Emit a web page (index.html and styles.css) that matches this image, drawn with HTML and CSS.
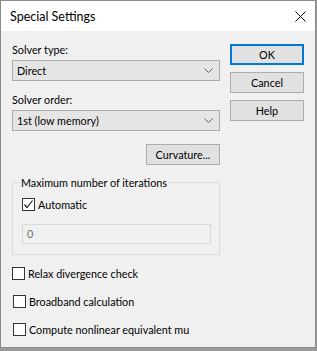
FILE: index.html
```html
<!doctype html>
<html lang="en">
    <head>
        <meta charset="UTF-8" />
        <title>Special Settings</title>
        <link rel="stylesheet" href="styles.css">
    </head>
    <body>
        <div class="window">
            <div class="titlebar">
                <span class="title">Special Settings</span>
                <svg class="close" width="11" height="11" viewBox="0 0 11 11">
                    <path d="M0.5 0.5 L10.5 10.5 M10.5 0.5 L0.5 10.5" stroke="#000" stroke-width="1" fill="none" />
                </svg>
            </div>

            <div class="content">
                <div class="main">
                    <div class="label first">Solver type:</div>
                    <div class="combo">
                        <span>Direct</span>
                        <svg class="chevron" width="9" height="5" viewBox="0 0 9 5">
                            <path d="M0.5 0.5 L4.5 4.5 L8.5 0.5" stroke="#606060" fill="none" />
                        </svg>
                    </div>

                    <div class="label">Solver order:</div>
                    <div class="combo">
                        <span>1st (low memory)</span>
                        <svg class="chevron" width="9" height="5" viewBox="0 0 9 5">
                            <path d="M0.5 0.5 L4.5 4.5 L8.5 0.5" stroke="#606060" fill="none" />
                        </svg>
                    </div>

                    <div class="curv-row">
                        <button class="btn curv">Curvature...</button>
                    </div>

                    <fieldset class="group">
                        <legend>Maximum number of iterations</legend>
                        <div class="check-row inner">
                            <span class="box">
                                <svg width="11" height="11" viewBox="0 0 11 11">
                                    <path d="M1.5 5.5 L4 8.5 L9.5 1.5" stroke="#222" stroke-width="1.2" fill="none" />
                                </svg>
                            </span>
                            <span>Automatic</span>
                        </div>
                        <div class="field">0</div>
                    </fieldset>

                    <div class="check-row relax">
                        <span class="box"></span>
                        <span>Relax divergence check</span>
                    </div>
                    <div class="check-row opt">
                        <span class="box"></span>
                        <span>Broadband calculation</span>
                    </div>
                    <div class="check-row opt">
                        <span class="box"></span>
                        <span>Compute nonlinear equivalent mu</span>
                    </div>
                </div>

                <div class="side">
                    <button class="btn ok">OK</button>
                    <button class="btn">Cancel</button>
                    <button class="btn">Help</button>
                </div>
            </div>
        </div>
    </body>
</html>
```

FILE: styles.css
```css
body {
    margin: 0;
    background: #9a9a9a;
    font-family: Lato, 'Noto Sans', sans-serif;
    font-size: 10.8px;
    color: #000;
    white-space: nowrap;
}

.window {
    width: 314px;
    height: 346px;
    border: 1px solid #8a8a8a;
    background: #f0f0f0;
}

.titlebar {
    height: 30px;
    background: #fff;
    display: flex;
    align-items: center;
    justify-content: space-between;
    padding: 0 9px 0 9px;
}

.title {
    font-size: 12.5px;
    line-height: 15px;
}

.close {
    display: block;
}

.content {
    display: flex;
}

.main {
    width: 208px;
    margin-left: 11px;
}

.label {
    line-height: 15px;
    margin-top: 11px;
}

.combo {
    height: 19px;
    margin-top: 3px;
    border: 1px solid #acacac;
    background: #e5e5e5;
    display: flex;
    align-items: center;
    justify-content: space-between;
    padding: 0 6px 0 4px;
    line-height: 15px;
}

.chevron {
    display: block;
}

.curv-row {
    display: flex;
    justify-content: flex-end;
    margin-top: 13px;
}

.btn {
    display: block;
    width: 74px;
    height: 21px;
    padding: 0;
    border: 1px solid #adadad;
    background: #e1e1e1;
    font-family: Lato, 'Noto Sans', sans-serif;
    font-size: 10.8px;
    color: #000;
    line-height: 15px;
}

.group {
    margin: 10px 0 0 0;
    padding: 0 0 10px 0;
    border: 1px solid #dcdcdc;
    min-width: 0;
}

.group legend {
    margin-left: 7px;
    padding: 0 1px;
    line-height: 15px;
}

.check-row {
    display: flex;
    align-items: center;
    height: 15px;
    line-height: 15px;
}

.check-row .box {
    width: 11px;
    height: 11px;
    border: 1px solid #333;
    background: #fff;
    margin-right: 3px;
    flex: none;
}

.check-row .box svg {
    display: block;
}

.inner {
    margin: 7px 0 0 9px;
}

.field {
    width: 181px;
    height: 18px;
    margin: 12px 0 0 9px;
    border: 1px solid #d9d9d9;
    background: #f0f0f0;
    color: #6d6d6d;
    padding: 0 2px 0 4px;
    line-height: 18px;
}

.relax {
    margin-top: 11px;
}

.opt {
    margin-top: 13px;
    margin-left: 1px;
}

.side {
    margin-left: 10px;
    margin-top: 13px;
    display: flex;
    flex-direction: column;
    gap: 7px;
}

.ok {
    border: 2px solid #0078d7;
}
```
